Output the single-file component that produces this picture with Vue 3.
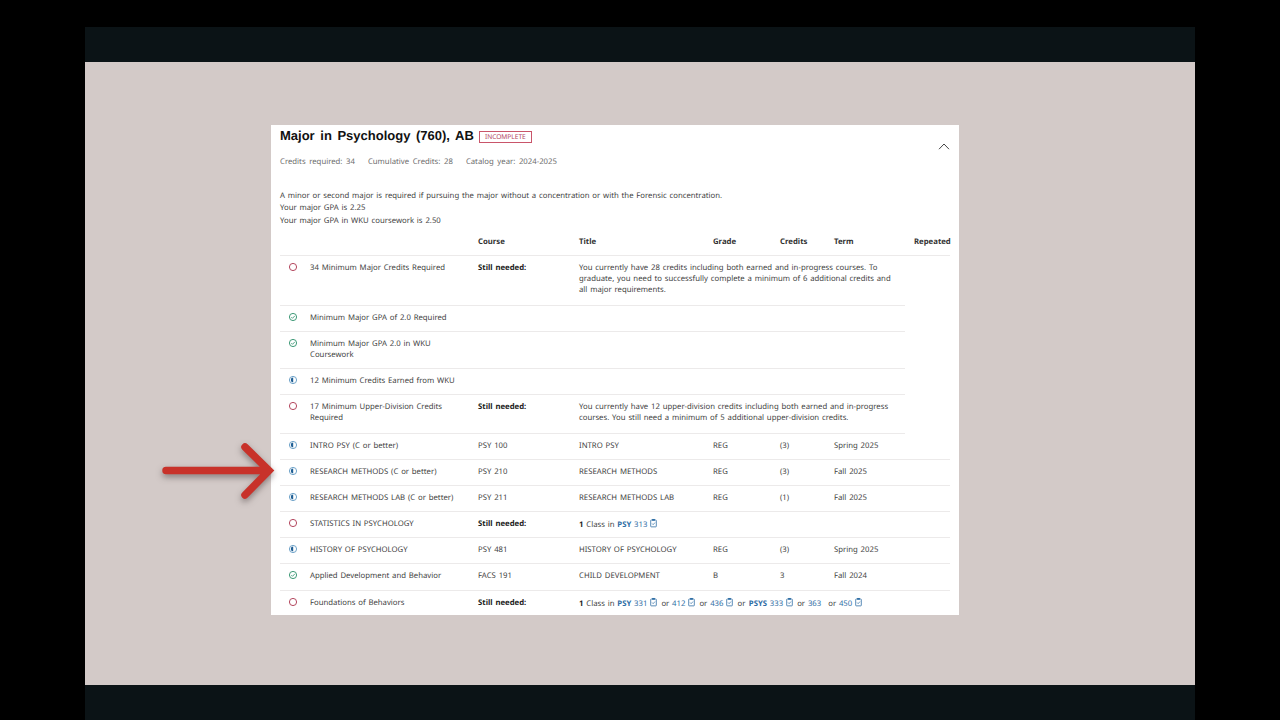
<script setup>
const reqs = [
  { status: 'open', name: '34 Minimum Major Credits Required', needed: 'You currently have 28 credits including both earned and in-progress courses. To graduate, you need to successfully complete a minimum of 6 additional credits and all major requirements.', h: 50, short: true },
  { status: 'done', name: 'Minimum Major GPA of 2.0 Required', h: 26, short: true },
  { status: 'done', name: 'Minimum Major GPA 2.0 in WKU Coursework', h: 37, short: true },
  { status: 'prog', name: '12 Minimum Credits Earned from WKU', h: 26, short: true },
  { status: 'open', name: '17 Minimum Upper-Division Credits Required', needed: 'You currently have 12 upper-division credits including both earned and in-progress courses. You still need a minimum of 5 additional upper-division credits.', h: 39, short: true },
  { status: 'prog', name: 'INTRO PSY (C or better)', course: 'PSY 100', title: 'INTRO PSY', grade: 'REG', credits: '(3)', term: 'Spring 2025', h: 26 },
  { status: 'prog', name: 'RESEARCH METHODS (C or better)', course: 'PSY 210', title: 'RESEARCH METHODS', grade: 'REG', credits: '(3)', term: 'Fall 2025', h: 26 },
  { status: 'prog', name: 'RESEARCH METHODS LAB (C or better)', course: 'PSY 211', title: 'RESEARCH METHODS LAB', grade: 'REG', credits: '(1)', term: 'Fall 2025', h: 26 },
  { status: 'open', name: 'STATISTICS IN PSYCHOLOGY', classes: [{ subj: 'PSY', num: '313', clip: true }], h: 26 },
  { status: 'prog', name: 'HISTORY OF PSYCHOLOGY', course: 'PSY 481', title: 'HISTORY OF PSYCHOLOGY', grade: 'REG', credits: '(3)', term: 'Spring 2025', h: 26 },
  { status: 'done', name: 'Applied Development and Behavior', course: 'FACS 191', title: 'CHILD DEVELOPMENT', grade: 'B', credits: '3', term: 'Fall 2024', h: 27 },
  {
    status: 'open',
    name: 'Foundations of Behaviors',
    classes: [
      { subj: 'PSY', num: '331', clip: true },
      { num: '412', clip: true },
      { num: '436', clip: true },
      { subj: 'PSYS', num: '333', clip: true },
      { num: '363' },
      { num: '450', clip: true }
    ],
    h: 26
  }
]
</script>

<template>
  <div class="stage">
    <div class="bar"></div>
    <main class="content">
      <section class="card">
        <header class="card-head">
          <div>
            <div class="title-row">
              <h1>Major in Psychology (760), AB</h1>
              <span class="badge">INCOMPLETE</span>
            </div>
            <div class="meta">
              <span>Credits required: 34</span>
              <span>Cumulative Credits: 28</span>
              <span>Catalog year: 2024-2025</span>
            </div>
          </div>
          <svg class="chevron" width="12" height="7" viewBox="0 0 12 7">
            <path d="M1 6.2 6 1l5 5.2" fill="none" stroke="#444" stroke-width="1" />
          </svg>
        </header>

        <div class="notes">
          <p class="note-main">A minor or second major is required if pursuing the major without a concentration or with the Forensic concentration.</p>
          <p>Your major GPA is 2.25</p>
          <p>Your major GPA in WKU coursework is 2.50</p>
        </div>

        <div class="row head">
          <span></span><span></span>
          <span>Course</span><span>Title</span><span>Grade</span><span>Credits</span><span>Term</span><span>Repeated</span>
        </div>

        <div
          v-for="r in reqs"
          :key="r.name"
          class="row"
          :class="{ short: r.short }"
          :style="{ height: r.h + 'px' }"
        >
          <span class="icon-cell">
            <svg width="10" height="10" viewBox="0 0 10 10">
              <circle v-if="r.status === 'open'" cx="5" cy="5" r="3.6" fill="none" stroke="#b4485f" stroke-width="1" />
              <template v-else-if="r.status === 'done'">
                <circle cx="5" cy="5" r="3.6" fill="none" stroke="#3f9a78" stroke-width="1" />
                <path d="M3.3 5.1 4.5 6.3 6.8 3.9" fill="none" stroke="#3f9a78" stroke-width="0.9" />
              </template>
              <template v-else>
                <circle cx="5" cy="5" r="3.6" fill="none" stroke="#6fa3c9" stroke-width="1" />
                <path d="M5.2 2.6a2.4 2.4 0 0 0 0 4.8z" fill="#1f5f95" />
              </template>
            </svg>
          </span>
          <span class="name">{{ r.name }}</span>

          <template v-if="r.needed">
            <b class="still">Still needed:</b>
            <span class="needed">{{ r.needed }}</span>
          </template>
          <template v-else-if="r.classes">
            <b class="still">Still needed:</b>
            <span class="needed classes">
              <b>1</b> Class in
              <template v-for="(c, i) in r.classes" :key="c.num">
                <span v-if="i > 0" class="or">or</span>
                <span class="link"><b v-if="c.subj">{{ c.subj }}</b> {{ c.num }}</span>
                <svg v-if="c.clip" class="clip" width="7" height="10" viewBox="0 0 8 10">
                  <rect x="0.8" y="1.6" width="6.4" height="7.8" rx="0.6" fill="none" stroke="#2f6ea5" stroke-width="0.9" />
                  <rect x="2.4" y="0.4" width="3.2" height="2" fill="#2f6ea5" />
                  <path d="M2.4 5.6 3.6 6.9 5.7 4.5" fill="none" stroke="#2f6ea5" stroke-width="0.8" />
                </svg>
              </template>
            </span>
          </template>
          <template v-else-if="r.course">
            <span>{{ r.course }}</span>
            <span>{{ r.title }}</span>
            <span>{{ r.grade }}</span>
            <span>{{ r.credits }}</span>
            <span>{{ r.term }}</span>
          </template>
        </div>
      </section>

      <svg class="arrow" width="120" height="62" viewBox="0 0 120 62">
        <path d="M7 31.5H108M86 8l24 23.5L86 56" fill="none" stroke="#c8322a" stroke-width="7.5" stroke-linecap="round" />
      </svg>
    </main>
    <div class="bar"></div>
  </div>
</template>

<style>
html, body {
  margin: 0;
  background: #000;
}
</style>

<style scoped>
.stage {
  width: 1110px;
  height: 693px;
  margin: 27px 0 0 85px;
  display: flex;
  flex-direction: column;
  overflow: hidden;
  font-family: "Noto Sans", "Open Sans", sans-serif;
  text-rendering: geometricPrecision;
}

.bar {
  height: 35px;
  flex: none;
  background: #0b1316;
}

.content {
  position: relative;
  flex: 1;
  background: #d3cac8;
  padding: 63px 0 0 186px;
  overflow: hidden;
}

.card {
  width: 688px;
  height: 490px;
  box-sizing: border-box;
  padding: 0 9px;
  background: #fff;
  color: #3f3f3f;
  font-size: 7.75px;
  line-height: 11px;
  word-spacing: 0.8px;
  overflow: hidden;
}

.card-head {
  display: flex;
  justify-content: space-between;
  height: 66px;
}

.title-row {
  display: flex;
  align-items: center;
  gap: 5px;
  padding-top: 3px;
}

h1 {
  margin: 0;
  font-family: "Liberation Sans", sans-serif;
  font-size: 13px;
  line-height: 16px;
  font-weight: 700;
  word-spacing: 2px;
  color: #111;
}

.badge {
  border: 1px solid #c9556a;
  color: #b4485f;
  font-size: 6.6px;
  line-height: 10px;
  padding: 0 5px;
  margin-top: 2px;
  word-spacing: 0;
}

.meta {
  display: flex;
  gap: 13px;
  margin-top: 13px;
  color: #6c6c6c;
  word-spacing: 1.6px;
}

.chevron {
  margin-top: 18px;
}

.notes p {
  margin: 0 0 2px;
}

.notes .note-main {
  margin-bottom: 0.5px;
}

.row {
  display: grid;
  grid-template-columns: 30px 168px 101px 134px 67px 54px 80px 36px;
  box-sizing: border-box;
  padding-top: 7px;
  border-bottom: 1px solid #eceaea;
}

.row.short {
  width: 625px;
  border-bottom-width: 1.5px;
}

.row .needed {
  grid-column: 4 / 8;
}

.row.short .needed {
  width: 315px;
}

.row.head {
  height: 19px;
  margin-top: 10.5px;
  padding-top: 0;
  font-weight: 700;
  color: #333;
  white-space: nowrap;
}

.name {
  padding-right: 10px;
}

.still {
  font-weight: 700;
  color: #222;
}

.icon-cell {
  padding-left: 8px;
  margin-top: -1px;
}

.icon-cell svg {
  display: block;
}

.classes {
  white-space: nowrap;
  margin-top: -1px;
}

.classes b {
  color: #222;
}

.link {
  color: #2f6ea5;
}

.link b {
  color: #2f6ea5;
}

.or + .link b {
  margin-left: 3.5px;
}

.or {
  margin-left: 4px;
}

.link + .or {
  margin-left: 7px;
}

.clip {
  margin-left: 3px;
  vertical-align: -1px;
}

.arrow {
  position: absolute;
  left: 74px;
  top: 377px;
  filter: drop-shadow(0 3px 3px rgba(60, 50, 50, 0.5));
}
</style>
